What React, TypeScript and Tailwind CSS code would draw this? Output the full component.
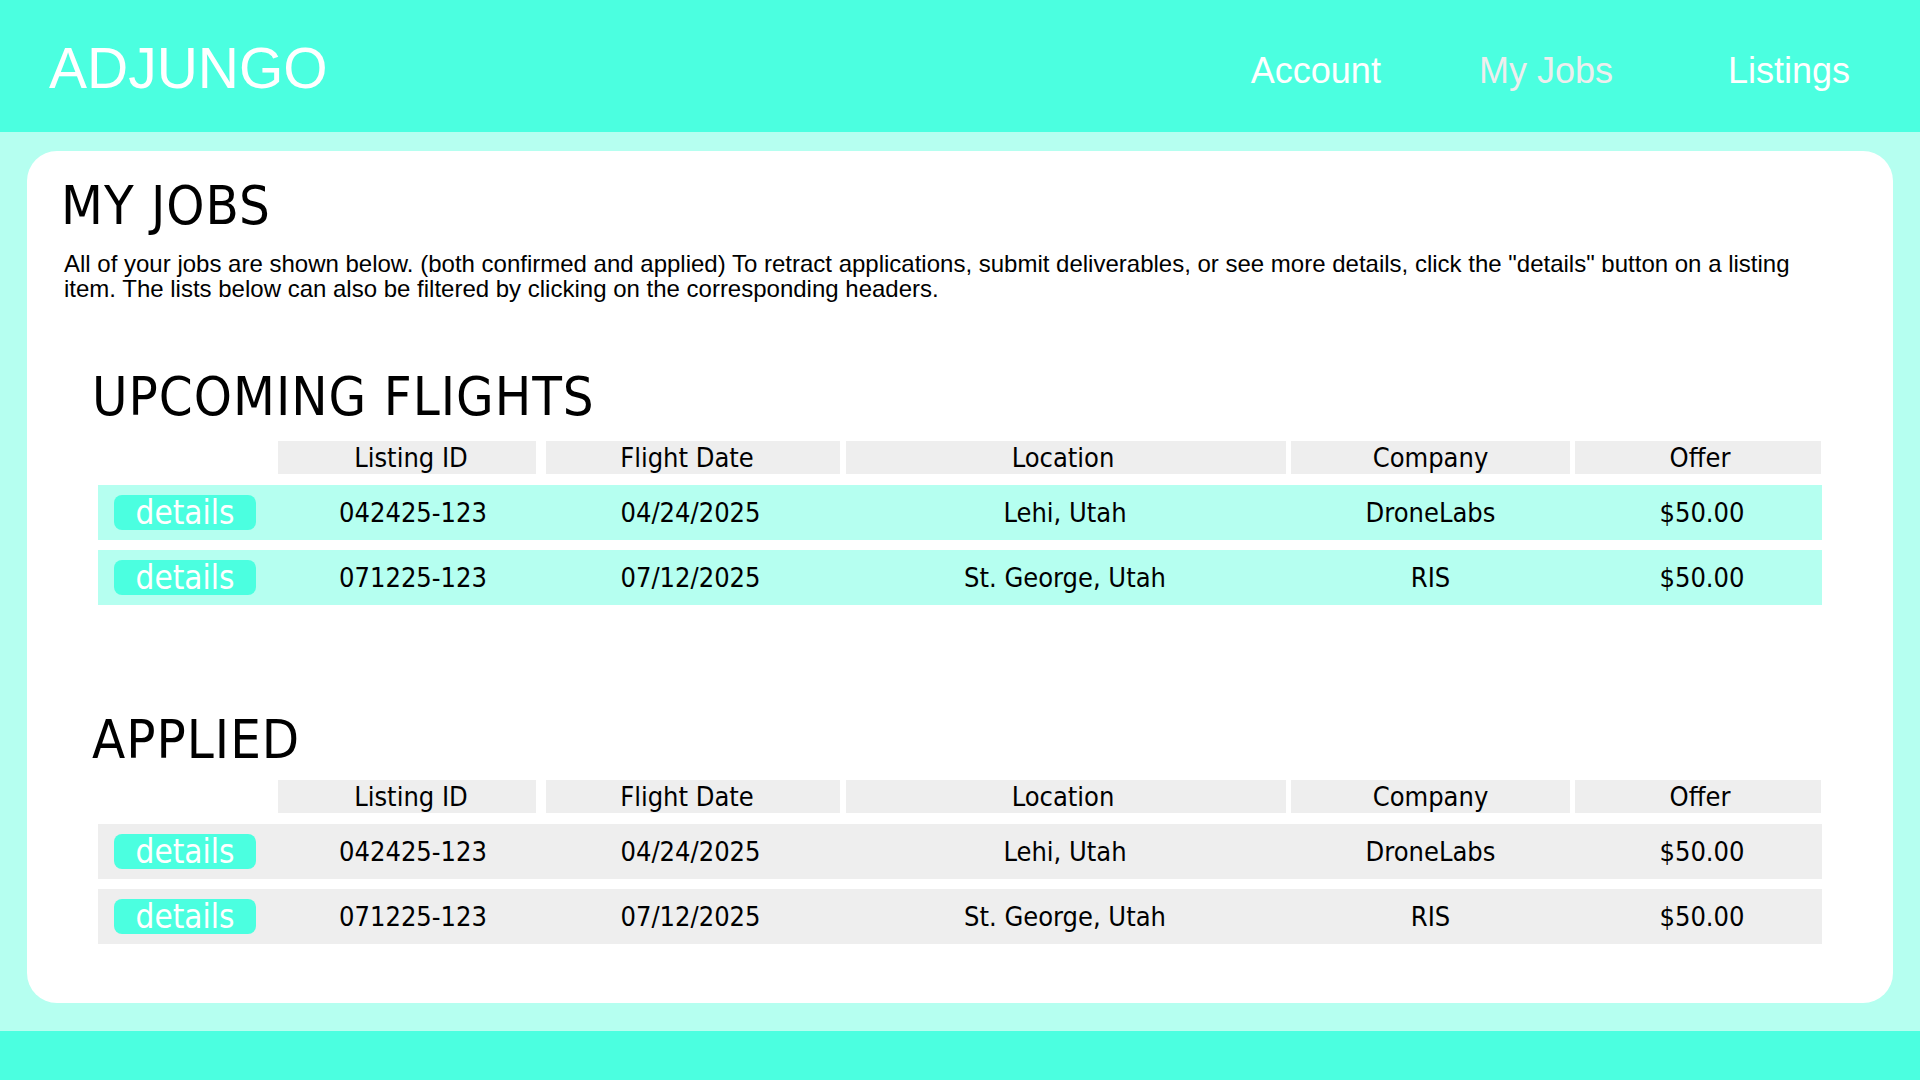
import React from "react";

// widths + small per-column nudges so labels sit where the mockup has them
const cols = [
  { key: "id", label: "Listing ID", cls: "w-[258px]", head: "pl-[8px]", cell: "pl-[12px]" },
  { key: "date", label: "Flight Date", cls: "w-[294px] ml-[10px]", head: "pr-[12px]", cell: "pr-[5px]" },
  { key: "loc", label: "Location", cls: "w-[440px] ml-[6px]", head: "pr-[6px]", cell: "pr-[2px]" },
  { key: "company", label: "Company", cls: "w-[279px] ml-[5px]", head: "", cell: "" },
  { key: "offer", label: "Offer", cls: "w-[246px] ml-[5px]", head: "pl-[4px]", cell: "pl-[8px]" },
];

type Job = { id: string; date: string; loc: string; company: string; offer: string };

const jobs: Job[] = [
  { id: "042425-123", date: "04/24/2025", loc: "Lehi, Utah", company: "DroneLabs", offer: "$50.00" },
  { id: "071225-123", date: "07/12/2025", loc: "St. George, Utah", company: "RIS", offer: "$50.00" },
];

const tahoma = "font-['DejaVu_Sans_Condensed','DejaVu_Sans',sans-serif] [font-stretch:condensed]";

function JobTable({ rowBg }: { rowBg: string }) {
  return (
    <div className={`ml-[71px] w-[1724px] ${tahoma} text-[27px] text-black`}>
      <div className="flex ml-[180px]">
        {cols.map((c) => (
          <div key={c.key} className={`${c.cls} ${c.head} h-[33px] bg-[#eeeeee] flex items-center justify-center leading-none`}>
            {c.label}
          </div>
        ))}
      </div>
      {jobs.map((j, i) => (
        <div key={i} className={`flex items-center h-[55px] ${rowBg} ${i === 0 ? "mt-[11px]" : "mt-[10px]"}`}>
          <div className="w-[180px] flex">
            <button className="ml-[16px] w-[142px] h-[35px] rounded-[8px] bg-[#4bffe0] text-white text-[33px] leading-none flex items-center justify-center">
              details
            </button>
          </div>
          {cols.map((c) => (
            <div key={c.key} className={`${c.cls} ${c.cell} text-center leading-none`}>
              {j[c.key as keyof Job]}
            </div>
          ))}
        </div>
      ))}
    </div>
  );
}

export default function App() {
  return (
    <div className="w-[1920px] h-[1080px] flex flex-col bg-[#b5fff0] overflow-hidden">
      <header className="h-[132px] shrink-0 bg-[#4bffe0] flex items-start font-['Liberation_Sans',Arial,sans-serif] text-white">
        <div className="ml-[49px] mt-[40px] text-[57px] leading-none">ADJUNGO</div>
        <nav className="ml-auto mt-[53px] flex text-[36px] leading-none">
          <a className="mr-[98px]">Account</a>
          <a className="mr-[115px] text-[#eeeeee]">My Jobs</a>
          <a className="mr-[70px]">Listings</a>
        </nav>
      </header>

      <main className="flex-1 pt-[19px] pb-[28px] px-[27px]">
        <div className="h-full bg-white rounded-[30px] pt-[28px]">
          <h1 className={`ml-[34px] ${tahoma} text-[54px] tracking-[1px] leading-none text-black`}>MY JOBS</h1>
          <p className="ml-[37px] mt-[18px] w-[1750px] font-['Liberation_Sans',Arial,sans-serif] text-[24px] leading-[25px] text-black">
            All of your jobs are shown below. (both confirmed and applied) To retract applications, submit deliverables, or see more details, click the "details" button on a listing item. The lists below can also be filtered by clicking on the corresponding headers.
          </p>

          <h2 className={`ml-[65px] mt-[69px] mb-[17px] ${tahoma} text-[54px] tracking-[1px] leading-none text-black`}>UPCOMING FLIGHTS</h2>
          <JobTable rowBg="bg-[#b5fff0]" />

          <h2 className={`ml-[65px] mt-[108px] mb-[13px] ${tahoma} text-[54px] tracking-[1px] leading-none text-black`}>APPLIED</h2>
          <JobTable rowBg="bg-[#eeeeee]" />
        </div>
      </main>

      <footer className="h-[49px] shrink-0 bg-[#4bffe0]" />
    </div>
  );
}
